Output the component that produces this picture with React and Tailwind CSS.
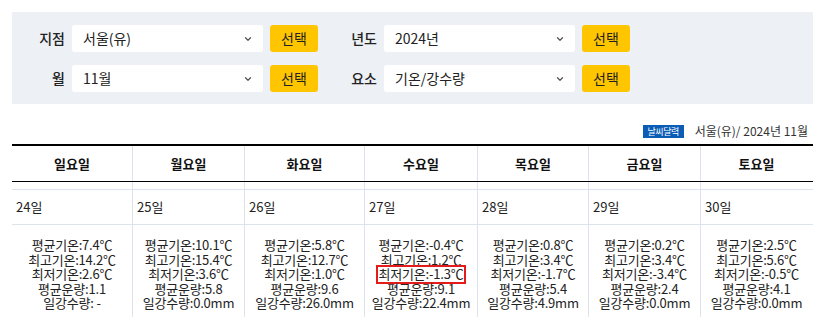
import React from 'react';
import { ChevronDown } from 'lucide-react';

const font = { fontFamily: '"Noto Sans CJK KR", "Noto Sans", sans-serif' };

const days = [
  { name: '일요일', date: '24일', avg: '7.4', max: '14.2', min: '2.6', cloud: '1.1', rain: ' -' },
  { name: '월요일', date: '25일', avg: '10.1', max: '15.4', min: '3.6', cloud: '5.8', rain: '0.0mm' },
  { name: '화요일', date: '26일', avg: '5.8', max: '12.7', min: '1.0', cloud: '9.6', rain: '26.0mm' },
  { name: '수요일', date: '27일', avg: '-0.4', max: '1.2', min: '-1.3', cloud: '9.1', rain: '22.4mm', mark: true },
  { name: '목요일', date: '28일', avg: '0.8', max: '3.4', min: '-1.7', cloud: '5.4', rain: '4.9mm' },
  { name: '금요일', date: '29일', avg: '0.2', max: '3.4', min: '-3.4', cloud: '2.4', rain: '0.0mm' },
  { name: '토요일', date: '30일', avg: '2.5', max: '5.6', min: '-0.5', cloud: '4.1', rain: '0.0mm' },
];

const cols = 'grid grid-cols-[120px_112px_120px_113px_111px_112px_112px]';

const Field = ({ label, value, labelW }) => (
  <div className="flex items-center">
    <span className={`${labelW} pr-[7px] text-right text-[14px] font-medium text-[#222]`}>{label}</span>
    <div className="flex h-[27px] w-[191px] items-center justify-between rounded-[3px] bg-white pl-[11px] pr-[10px] text-[14px] text-[#222]">
      <span>{value}</span>
      <ChevronDown className="h-[10px] w-[10px] text-[#555]" strokeWidth={3} />
    </div>
    <button className="ml-[7px] h-[27px] w-[48px] rounded-[3px] bg-[#ffc600] text-[14px] text-[#222]">선택</button>
  </div>
);

export default function App() {
  return (
    <div className="h-[317px] w-[825px] overflow-hidden bg-white px-[12px] pt-[12px]" style={font}>
      <div className="flex flex-col gap-[13px] bg-[#edf0f5] pt-[13px] pb-[12px]">
        <div className="flex">
          <Field label="지점" value="서울(유)" labelW="w-[60px]" />
          <div className="w-[27px]" />
          <Field label="년도" value="2024년" labelW="w-[39px]" />
        </div>
        <div className="flex">
          <Field label="월" value="11월" labelW="w-[60px]" />
          <div className="w-[27px]" />
          <Field label="요소" value="기온/강수량" labelW="w-[39px]" />
        </div>
      </div>

      <div className="mt-[16px] flex h-[22px] items-center justify-end pr-[5px]">
        <span className="mr-[11px] flex h-[13px] w-[41px] items-center justify-center bg-[#0b5cb5] text-[9px] leading-none tracking-[-0.5px] text-white">날씨달력</span>
        <span className="text-[12px] text-[#333]">서울(유)/ 2024년 11월</span>
      </div>

      <div className="mt-[2px] border-t-2 border-black">
        <div className={`${cols} h-[36px] border-b border-black`}>
          {days.map((d, i) => (
            <div key={d.name} className={`flex items-center justify-center text-[13px] font-bold text-[#111] ${i ? 'border-l border-[#dde3ec]' : ''}`}>
              {d.name}
            </div>
          ))}
        </div>
        <div className={`${cols} h-[8px] border-b border-[#dde3ec]`}>
          {days.map((d, i) => (
            <div key={d.name} className={i ? 'border-l border-[#dde3ec]' : ''} />
          ))}
        </div>
        <div className={`${cols} h-[35px] border-b border-[#dde3ec]`}>
          {days.map((d, i) => (
            <div key={d.name} className={`flex items-center pl-[4px] text-[13px] text-[#222] ${i ? 'border-l border-[#dde3ec]' : ''}`}>
              {d.date}
            </div>
          ))}
        </div>
        <div className={`${cols} h-[100px]`}>
          {days.map((d, i) => (
            <div key={d.name} className={`flex flex-col items-center pt-[13px] text-[13px] leading-[14.6px] tracking-[-0.2px] text-[#222] ${i ? 'border-l border-[#dde3ec]' : ''}`}>
              <span>평균기온:{d.avg}℃</span>
              <span>최고기온:{d.max}℃</span>
              <span className={d.mark ? 'outline-2 outline-[#e31b1b]' : ''}>최저기온:{d.min}℃</span>
              <span>평균운량:{d.cloud}</span>
              <span>일강수량:{d.rain}</span>
            </div>
          ))}
        </div>
      </div>
    </div>
  );
}
